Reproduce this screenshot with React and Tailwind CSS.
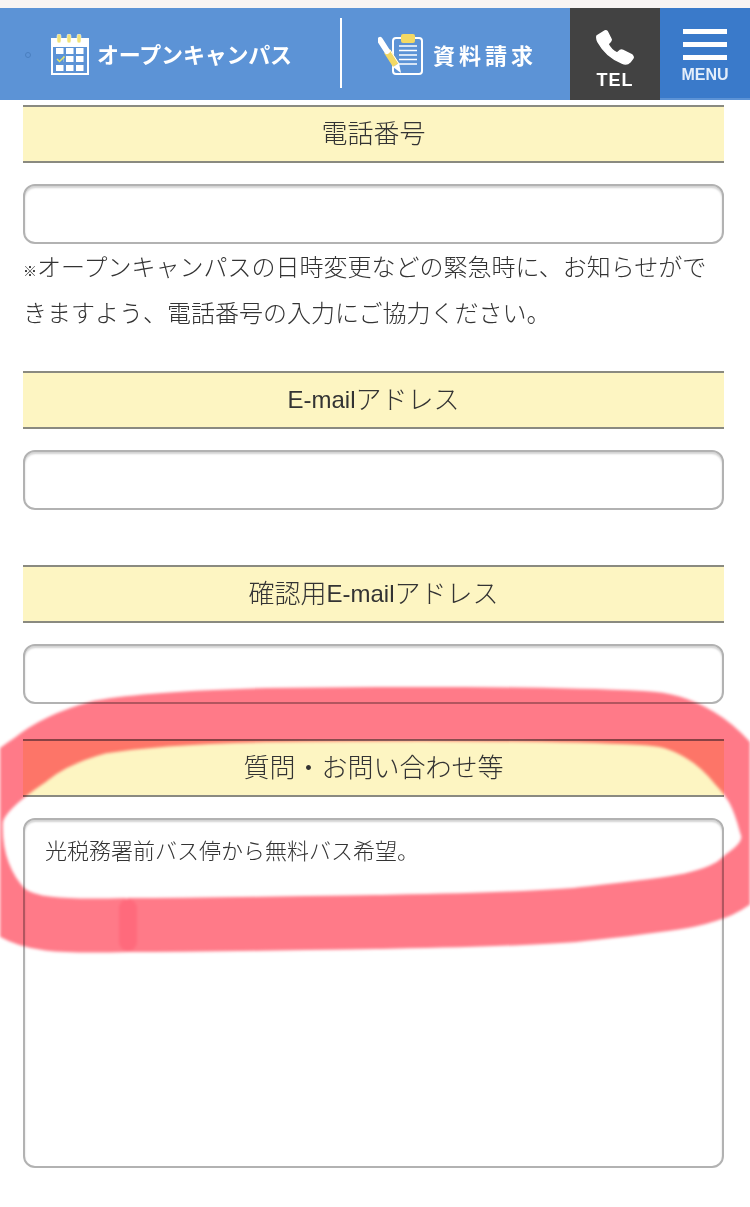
const font = 'font-["Liberation_Sans","Noto_Sans_CJK_JP",sans-serif]';

function CalendarIcon() {
  return (
    <svg width="38" height="41" viewBox="0 0 38 41" className="shrink-0">
      <rect x="0" y="4" width="38" height="37" fill="#fff" />
      <rect x="2" y="13" width="34" height="26" fill="#5c93d6" />
      {[5, 15, 25].map((x) =>
        [14, 22, 31].map((y) => <rect key={x + '-' + y} x={x} y={y} width="7.5" height="6" fill="#fff" />)
      )}
      <rect x="5" y="22" width="7.5" height="6" fill="#5c93d6" />
      <path d="M6 25l2.5 2.5 5-5" fill="none" stroke="#e6e66a" strokeWidth="1.5" />
      {[8, 18, 28].map((x) => (
        <rect key={x} x={x - 2} y="0" width="4" height="9" rx="2" fill="#f0e27a" stroke="#fff" strokeWidth="0.5" />
      ))}
    </svg>
  );
}

function ClipboardIcon() {
  return (
    <svg width="46" height="41" viewBox="0 0 46 41" className="shrink-0">
      <rect x="15" y="4" width="29" height="36" rx="3" fill="none" stroke="#fff" strokeWidth="2" />
      <rect x="23" y="0" width="14" height="9" rx="2" fill="#f3d964" />
      {[12, 16.5, 21, 25.5, 30].map((y) => (
        <line key={y} x1="21" x2="39" y1={y} y2={y} stroke="#fff" strokeWidth="1.5" />
      ))}
      {/* pen */}
      <line x1="9" y1="17" x2="18" y2="31" stroke="#f3d964" strokeWidth="7" />
      <line x1="12" y1="16" x2="21" y2="30" stroke="#fff" strokeWidth="1" />
      <line x1="2" y1="6" x2="9" y2="17" stroke="#fff" strokeWidth="6" strokeLinecap="round" />
      <path d="M15 33 L21 29 L23 39 Z" fill="#fff" />
    </svg>
  );
}

function PhoneIcon() {
  return (
    <svg width="40" height="36" viewBox="0 0 40 36">
      <path
        d="M2 7 L10 2 C11 1.500 12 2 12.500 3 L16 10 C16.500 11 16 12 15 13 L13 15 C15 19 18 22 22 24 L25 21.500 C26 21 27 21 28 21.500 L37 26 C38 27 38.500 28 38 29 L35 33 C33 35 30 35.500 27 34 C16 30 8 22 3 13 C2 11 1.500 9 2 7 Z"
        fill="#fff"
        stroke="#fff"
        strokeWidth="1.5"
        strokeLinejoin="round"
      />
    </svg>
  );
}

function Heading({ children }) {
  return (
    <div className="bg-[#fdf5c2] border-y-2 border-[#8a8a80] h-[58px] flex items-center justify-center text-[26px] font-light text-[#333]">
      {children}
    </div>
  );
}

function Field() {
  return (
    <input
      type="text"
      className="block w-full h-[60px] mt-[21px] bg-white border-2 border-[#b2b2b2] rounded-xl shadow-[inset_0_2px_2px_rgba(0,0,0,0.18)]"
    />
  );
}

function Highlight() {
  return (
    <svg
      width="750"
      height="300"
      viewBox="0 680 750 300"
      className="absolute left-0 top-[680px] mix-blend-multiply blur-[1.5px] pointer-events-none"
    >
      <path
        d="M127 925 C210 925 300 923 375 922 C430 921 510 920 575 915 C620 910 660 906 690 900 C715 894 730 888 742 876 C768 858 772 840 766 825 C758 795 750 782 736 767 C722 750 712 742 700 735 C680 723 665 719 642 718 C560 714 420 713 267 715 C190 717 140 720 100 727 C70 735 48 745 30 760 C0 780 -22 800 -24 820 C-26 860 -12 890 6 908 C25 925 60 927 127 925"
        fill="none"
        stroke="#ff7a88"
        strokeWidth="54"
        strokeLinejoin="round"
      />
      <line x1="128" y1="908" x2="128" y2="942" stroke="#ff6a7c" strokeWidth="18" strokeLinecap="round" />
    </svg>
  );
}

export default function App() {
  return (
    <div className={`relative w-[750px] h-[1207px] overflow-hidden bg-white ${font}`}>
      <div className="h-2 bg-[#f8f4f3]" />

      {/* header bar */}
      <div className="flex h-[92px] bg-[#5c93d6] text-white font-bold">
        <div className="w-[340px] flex items-center relative pl-[51px] gap-[8px]">
          <span className="absolute left-[25px] top-[44px] w-[6px] h-[6px] rounded-full border border-[#4a7fc0]" />
          <CalendarIcon />
          <span className="text-[22px] tracking-[-0.2px] whitespace-nowrap pt-[2px]">オープンキャンパス</span>
        </div>
        <div className="w-[2px] h-[70px] mt-[10px] bg-white" />
        <div className="w-[228px] flex items-center pl-[36px] gap-[9px]">
          <ClipboardIcon />
          <span className="text-[22px] tracking-[4px] whitespace-nowrap pt-[5px]">資料請求</span>
        </div>
        <div className="w-[90px] bg-[#424242] flex flex-col items-center pt-[21px]">
          <PhoneIcon />
          <span className="text-[18px] leading-none mt-[6px] tracking-[1px]">TEL</span>
        </div>
        <div className="w-[90px] h-[90px] bg-[#3a7aca] flex flex-col items-center pt-[21px]">
          <div className="w-[44px] h-[5px] bg-white" />
          <div className="w-[44px] h-[5px] bg-white mt-[8px]" />
          <div className="w-[44px] h-[5px] bg-white mt-[8px]" />
          <span className="text-[16px] leading-none mt-[7px] text-[#e4eefa]">MENU</span>
        </div>
      </div>

      {/* form */}
      <div className="w-[701px] ml-[23px] mt-[5px] text-[#333]">
        <Heading>電話番号</Heading>
        <Field />
        <p className="text-[24px] font-light leading-[46px] mt-[1px]">
          <span className="block whitespace-nowrap">
            <span className="text-[14px] font-bold leading-none text-[#222]">※</span>オープンキャンパスの日時変更などの緊急時に、お知らせがで
          </span>
          <span className="block">きますよう、電話番号の入力にご協力ください。</span>
        </p>
        <div className="mt-[34px]">
          <Heading><span className="text-[24px]">E-mail</span>アドレス</Heading>
          <Field />
        </div>
        <div className="mt-[55px]">
          <Heading>確認用<span className="text-[24px]">E-mail</span>アドレス</Heading>
          <Field />
        </div>
        <div className="mt-[35px]">
          <Heading>質問・お問い合わせ等</Heading>
          <textarea
            defaultValue="光税務署前バス停から無料バス希望。"
            className="block w-full h-[350px] mt-[21px] px-[20px] py-[15px] text-[22px] font-light leading-[33px] text-[#333] bg-white border-2 border-[#b2b2b2] rounded-xl shadow-[inset_0_2px_2px_rgba(0,0,0,0.18)] resize-none outline-none"
          />
        </div>
      </div>

      <Highlight />
    </div>
  );
}
